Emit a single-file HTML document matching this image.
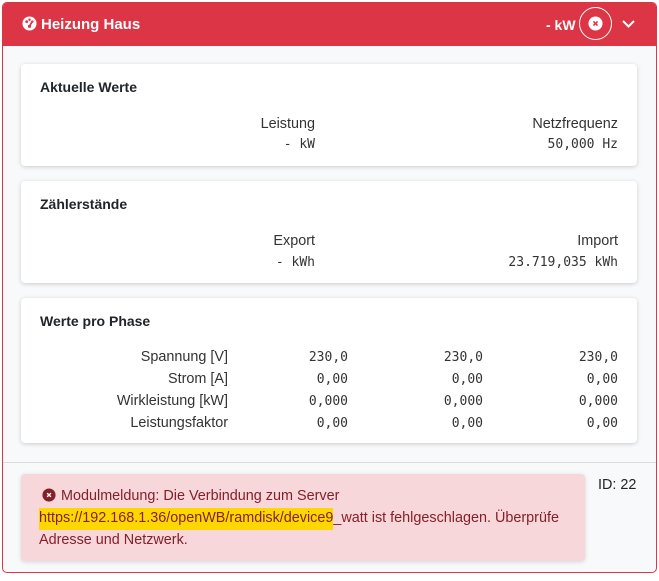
<!DOCTYPE html>
<html><head><meta charset="utf-8"><style>
*{box-sizing:border-box;margin:0;padding:0}
body{width:659px;height:581px;background:#fff;font-family:"Liberation Sans",Arial,sans-serif;color:#212529;position:relative;overflow:hidden}
.abs{position:absolute;white-space:nowrap}
.outer{position:absolute;left:2px;top:2px;width:655px;height:571px;border:1px solid #dc3545;border-radius:5px;background:#f8f9fa;overflow:hidden}
.hdr{position:absolute;left:0;top:0;width:100%;height:43px;background:#dc3545;color:#fff}
.card{position:absolute;left:21px;width:616px;background:#fff;border-radius:4px;box-shadow:0 1px 4px rgba(0,0,0,.18)}
.t{font-weight:bold;font-size:14px;color:#212529}
.l{font-size:14.4px;color:#333;text-align:right}
.m{font-family:"DejaVu Sans Mono","Liberation Mono",monospace;font-size:13px;color:#333;text-align:right}
</style></head><body>
<div class="outer">
 <div class="hdr">
  <svg class="abs" style="left:19px;top:13px" width="15" height="15" viewBox="0 0 16 16"><circle cx="8" cy="8" r="7.5" fill="#fff"/><circle cx="5" cy="6" r="1.5" fill="#dc3545"/><circle cx="8" cy="4" r="1.3" fill="#dc3545"/><circle cx="11" cy="6" r="1.3" fill="#dc3545"/><path d="M8 11 L10.5 6.5" stroke="#dc3545" stroke-width="1.8"/><circle cx="8" cy="11" r="1.7" fill="#dc3545"/></svg>
  <div class="abs" style="left:38px;top:13px;font-weight:bold;font-size:15px">Heizung Haus</div>
  <div class="abs" style="left:543px;top:14px;font-weight:bold;font-size:14px">- kW</div>
  <div class="abs" style="left:576px;top:4px;width:33px;height:33px;border:1.5px solid #fff;border-radius:50%"></div>
  <svg class="abs" style="left:585px;top:13px" width="15" height="15" viewBox="0 0 16 16"><circle cx="8" cy="8" r="7.5" fill="#fff"/><path d="M5.8 5.8 L10.2 10.2 M10.2 5.8 L5.8 10.2" stroke="#dc3545" stroke-width="1.6"/></svg>
  <svg class="abs" style="left:618px;top:15px" width="15" height="12" viewBox="0 0 15 12"><path d="M2 3 L7.5 8.5 L13 3" stroke="#fff" stroke-width="2" fill="none"/></svg>
 </div>
</div>
<div class="card" style="top:64px;height:102px">
 <div class="abs t" style="left:19px;top:15px">Aktuelle Werte</div>
 <div class="abs l" style="right:322px;top:52px">Leistung</div>
 <div class="abs m" style="right:322px;top:73px">- kW</div>
 <div class="abs l" style="right:19px;top:52px">Netzfrequenz</div>
 <div class="abs m" style="right:19px;top:73px">50,000 Hz</div>
</div>
<div class="card" style="top:181px;height:102px">
 <div class="abs t" style="left:19px;top:15px">Zählerstände</div>
 <div class="abs l" style="right:322px;top:52px">Export</div>
 <div class="abs m" style="right:322px;top:74px">- kWh</div>
 <div class="abs l" style="right:19px;top:52px">Import</div>
 <div class="abs m" style="right:19px;top:74px">23.719,035 kWh</div>
</div>
<div class="card" style="top:298px;height:145px">
 <div class="abs t" style="left:19px;top:15px">Werte pro Phase</div>
 <div class="abs l" style="right:409px;top:51px">Spannung [V]</div>
 <div class="abs l" style="right:409px;top:73px">Strom [A]</div>
 <div class="abs l" style="right:409px;top:95px">Wirkleistung [kW]</div>
 <div class="abs l" style="right:409px;top:117px">Leistungsfaktor</div>
 <div class="abs m" style="right:289px;top:52px">230,0</div><div class="abs m" style="right:154px;top:52px">230,0</div><div class="abs m" style="right:19px;top:52px">230,0</div>
 <div class="abs m" style="right:289px;top:74px">0,00</div><div class="abs m" style="right:154px;top:74px">0,00</div><div class="abs m" style="right:19px;top:74px">0,00</div>
 <div class="abs m" style="right:289px;top:96px">0,000</div><div class="abs m" style="right:154px;top:96px">0,000</div><div class="abs m" style="right:19px;top:96px">0,000</div>
 <div class="abs m" style="right:289px;top:118px">0,00</div><div class="abs m" style="right:154px;top:118px">0,00</div><div class="abs m" style="right:19px;top:118px">0,00</div>
</div>
<div class="abs" style="left:3px;top:462px;width:653px;height:1px;background:#dcdcdc"></div>
<div class="abs" style="left:21px;top:474px;width:564px;height:87px;background:#f8d7da;border-radius:4px;box-shadow:0 1px 4px rgba(0,0,0,.15)"></div>
<svg class="abs" style="left:42px;top:488px" width="14" height="14" viewBox="0 0 16 16"><circle cx="8" cy="8" r="7.5" fill="#842029"/><path d="M5.8 5.8 L10.2 10.2 M10.2 5.8 L5.8 10.2" stroke="#fff" stroke-width="1.6"/></svg>
<div class="abs" style="left:61px;top:488px;font-size:14.4px;color:#842029">Modulmeldung: Die Verbindung zum Server</div>
<div class="abs" style="left:39px;top:510px;font-size:14.4px;color:#842029"><span style="background:#ffd700;padding:2px 0 4px">https://192.168.1.36/openWB/ramdisk/device9</span>_watt ist fehlgeschlagen. Überprüfe</div>
<div class="abs" style="left:39px;top:532px;font-size:14.4px;color:#842029">Adresse und Netzwerk.</div>
<div class="abs" style="left:598px;top:477px;font-size:14.4px;color:#212529">ID: 22</div>
</body></html>
